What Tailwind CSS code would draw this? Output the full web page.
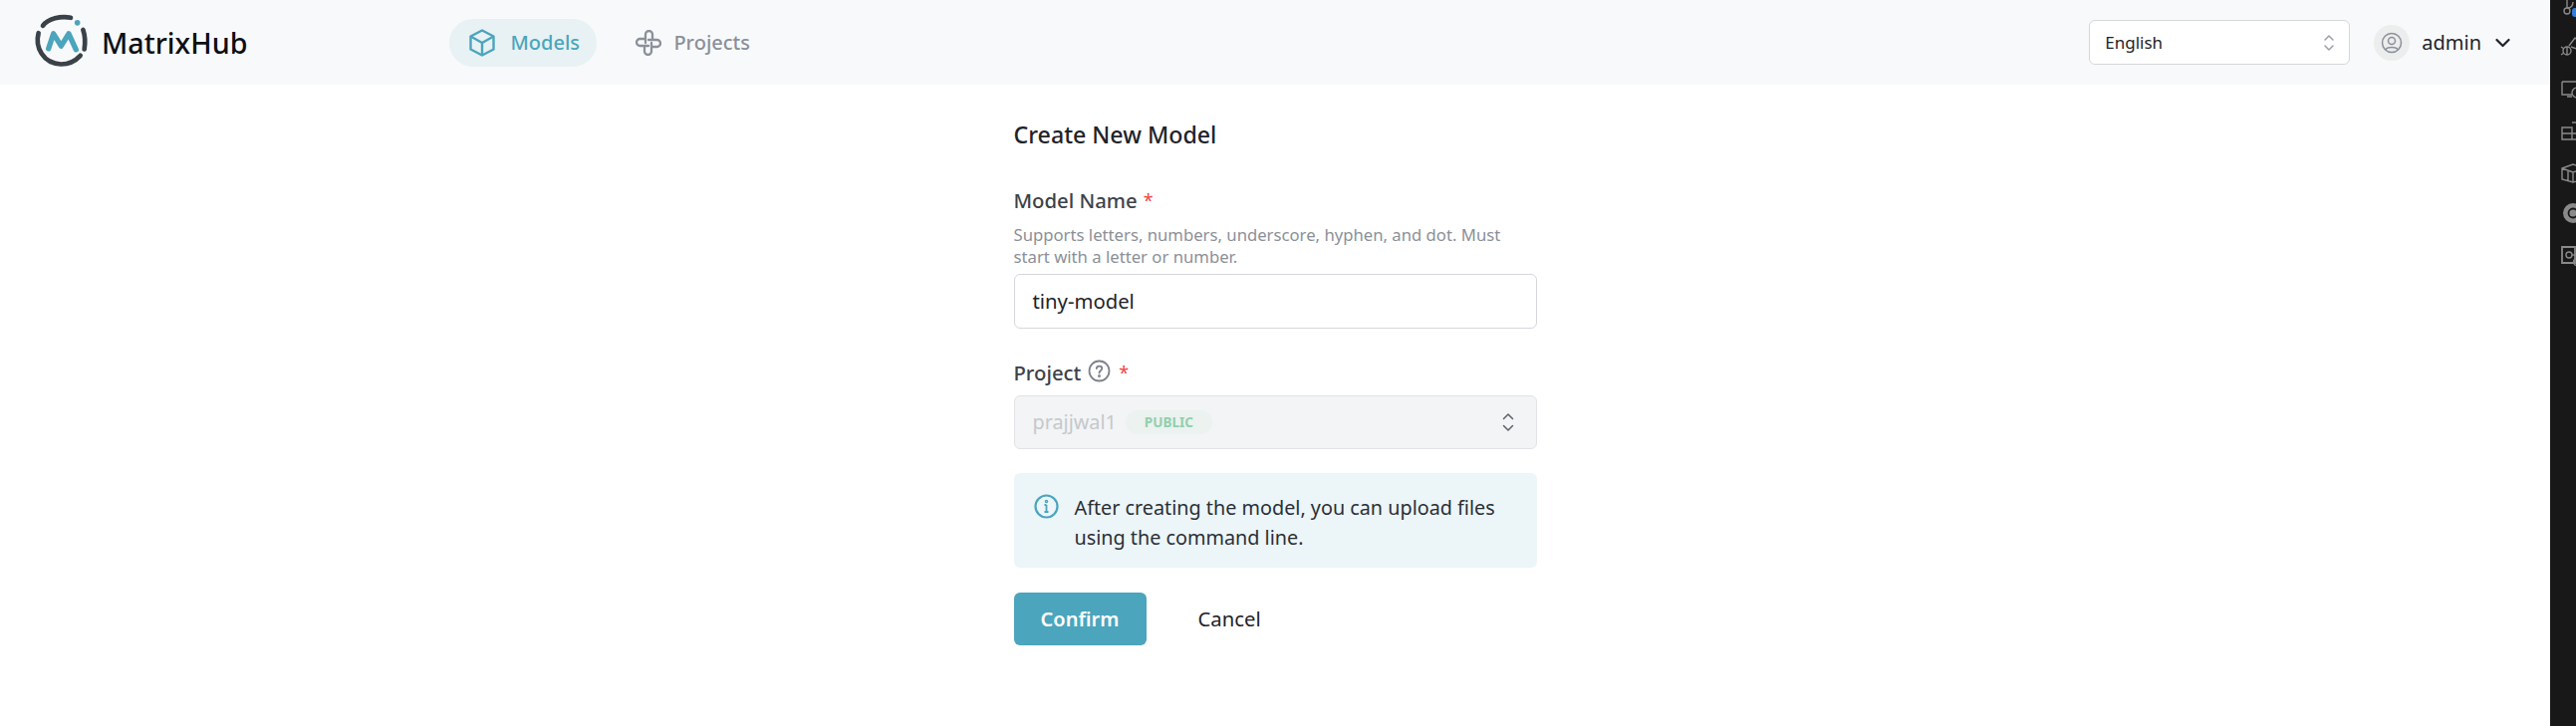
<!DOCTYPE html>
<html>
<head>
<meta charset="utf-8">
<script src="https://cdn.jsdelivr.net/npm/@tailwindcss/browser@4"></script>
</head>
<body class="bg-white h-screen overflow-hidden flex font-['Noto_Sans',sans-serif] text-[#1f2329]">
  <div class="flex-1 min-w-0">
    <header class="h-[85px] bg-[#f8f9fb] flex items-center pl-[33px] pr-[40px]">
      <svg class="w-[57px] h-[60px]" viewBox="40 37.5 171 180" fill="none">
        <path d="M70 76C85 55 125 45 154 52" stroke="#3a4149" stroke-width="14" stroke-linecap="round"/>
        <path d="M57 98C46 140 70 190 125 192C150 192 170 180 183 166" stroke="#3a4149" stroke-width="14" stroke-linecap="round"/>
        <path d="M191 88C198 108 198 128 195 147" stroke="#3a4149" stroke-width="14" stroke-linecap="round"/>
        <circle cx="174" cy="67" r="8.500" fill="#4ba5bc"/>
        <path d="M87 145L102 100L125 137L148 100L170 148" stroke="#4ba5bc" stroke-width="16" stroke-linecap="round" stroke-linejoin="round"/>
      </svg>
      <span class="ml-[12px] text-[28.700px] font-medium text-[#0b0f14]">MatrixHub</span>
      <nav class="ml-[203px] flex items-center gap-[39px]">
        <a class="h-[48px] w-[148px] rounded-full bg-[#e8f1f4] flex items-center pl-[20px] gap-[15px] text-[#4ba5bc] text-[20px] font-medium">
          <svg class="w-[26px] h-[28px]" viewBox="0 0 26 28" fill="none" stroke="#4ba5bc" stroke-width="2.400" stroke-linejoin="round"><path d="M13 1.500L24.500 7.500V20.500L13 26.500L1.500 20.500V7.500Z"/><path d="M1.500 7.500L13 14L24.500 7.500M13 14V26.500"/></svg>
          Models
        </a>
        <a class="flex items-center gap-[12px] text-[#8b9099] text-[20px] font-medium">
          <svg class="w-[26px] h-[26px]" viewBox="0 0 26 26" fill="none" stroke="#8b9099" stroke-width="2.300" stroke-linejoin="round" stroke-linecap="round"><path d="M10 13V4.500a3.500 3.500 0 0 1 7 0V9"/><path d="M13 10H21.500a3.500 3.500 0 0 1 0 7H17"/><path d="M16 13V21.500a3.500 3.500 0 0 1-7 0V17"/><path d="M13 16H4.500a3.500 3.500 0 0 1 0-7H9"/></svg>
          Projects
        </a>
      </nav>
      <div class="ml-auto w-[262px] h-[45px] bg-white border border-[#d5d7db] rounded-[6px] flex items-center justify-between pl-[15px] pr-[14px] text-[17px]">
        English
        <svg class="w-[12px] h-[18px]" viewBox="0 0 12 18" fill="none" stroke="#9a9ea6" stroke-width="1.500" stroke-linecap="round" stroke-linejoin="round"><path d="M2 6L6 2L10 6M2 12L6 16L10 12"/></svg>
      </div>
      <div class="ml-[24px] w-[36px] h-[36px] rounded-full bg-[#eceded] flex items-center justify-center">
        <svg class="w-[22px] h-[22px]" viewBox="0 0 22 22" fill="none" stroke="#8b9099" stroke-width="1.500"><circle cx="11" cy="11" r="9.500"/><circle cx="11" cy="9" r="3.500"/><path d="M4.800 18C6 14.500 16 14.500 17.200 18"/></svg>
      </div>
      <span class="ml-[12px] text-[20px]">admin</span>
      <svg class="ml-[14px] w-[15px] h-[10px]" viewBox="0 0 15 10" fill="none" stroke="#1f2329" stroke-width="2.200" stroke-linecap="round" stroke-linejoin="round"><path d="M1.500 2L7.500 8L13.500 2"/></svg>
    </header>

    <main class="w-[525px] mx-auto pt-[34px]">
      <h1 class="text-[23.200px] leading-[32px] font-medium">Create New Model</h1>

      <div class="mt-[36px] flex items-center gap-[6px] text-[20.300px] leading-[28px] font-medium text-[#3d4249]">Model Name <span class="text-[18px] font-normal text-[#ef4444]">*</span></div>
      <p class="mt-[10px] text-[16.700px] leading-[22px] text-[#8b9099]">Supports letters, numbers, underscore, hyphen, and dot. Must start with a letter or number.</p>
      <div class="mt-[6px] h-[55px] bg-white border border-[#d5d7db] rounded-[6px] flex items-center px-[18px] text-[20.300px]">tiny-model</div>

      <div class="mt-[30px] flex items-center text-[20.300px] leading-[28px] font-medium text-[#3d4249]">
        Project
        <svg class="ml-[7px] -mt-[3px] w-[23px] h-[23px]" viewBox="0 0 23 23" fill="none" stroke="#7d828a" stroke-width="1.800"><circle cx="11.500" cy="11.500" r="10"/><path d="M8.800 9C9 5.800 14.300 5.800 14.300 9C14.300 11 11.500 11 11.500 13.500" stroke-linecap="round"/><circle cx="11.500" cy="16.500" r="0.600"/></svg>
        <span class="ml-[8px] text-[18px] font-normal text-[#ef4444]">*</span>
      </div>
      <div class="mt-[9px] h-[54px] bg-[#f2f4f5] border border-[#e1e3e6] rounded-[6px] flex items-center pl-[18px] pr-[22px] text-[19.800px] text-[#c5c8cc]">
        prajjwal1
        <span class="ml-[9px] h-[24px] px-[19px] rounded-full bg-[#ebf2ef] flex items-center text-[13.500px] font-bold text-[#93cfae]">PUBLIC</span>
        <svg class="ml-auto w-[12px] h-[20px]" viewBox="0 0 12 20" fill="none" stroke="#5c6168" stroke-width="1.500" stroke-linecap="round" stroke-linejoin="round"><path d="M1.500 6.500L6 2L10.500 6.500M1.500 13.500L6 18L10.500 13.500"/></svg>
      </div>

      <div class="mt-[24px] h-[95px] bg-[#ecf5f8] rounded-[6px] flex px-[20px] pt-[20px] gap-[16px]">
        <svg class="shrink-0 mt-[1px] w-[25px] h-[25px]" viewBox="0 0 25 25" fill="none" stroke="#4ba5bc" stroke-width="2.200"><circle cx="12.500" cy="12.500" r="11"/><path d="M12.500 11V18M10.500 11H12.500M10.500 18H14.500" stroke-width="1.800"/><circle cx="12.500" cy="7.500" r="0.700"/></svg>
        <p class="text-[19.800px] leading-[30px] text-[#2a2f36]">After creating the model, you can upload files using the command line.</p>
      </div>

      <div class="mt-[25px] flex items-center">
        <button class="w-[133px] h-[53px] rounded-[6px] bg-[#4ba5bc] text-white text-[20px] font-semibold">Confirm</button>
        <button class="ml-[52px] text-[20.300px]">Cancel</button>
      </div>
    </main>
  </div>

  <aside class="w-[26px] shrink-0 bg-[#181818] overflow-hidden relative">
    <svg class="absolute left-[10px] top-0 w-[30px] h-[270px]" viewBox="0 0 30 270" fill="none" stroke="#8a8a8a" stroke-width="1.400">
      <path d="M7 0V8M7 8C11 8 13 6 13 2"/><circle cx="7" cy="11" r="3"/>
      <path d="M9 46L15 38L24 46M11 47L20 50"/><circle cx="7" cy="51" r="4"/><path d="M1 47L4 49M1 55L4 53M7 47V55"/>
      <path d="M2 82H26M2 82V95H12M7 97H12"/><circle cx="17" cy="93" r="5"/>
      <path d="M2 128H12V140H2ZM2 128V134H24M12 123H24V140H12M12 128V140"/>
      <path d="M2 169L13 165L26 169V180L13 183L2 180ZM2 169L13 173L26 169M13 173V183M8 171V181"/>
      <circle cx="13" cy="214" r="10" fill="#8a8a8a" stroke="none"/><circle cx="13" cy="214" r="4.500" stroke="#181818" stroke-width="1.800"/>
      <path d="M2 248H15V264H2Z" stroke-width="1.800"/><circle cx="9" cy="256" r="3"/><path d="M12 256H20"/><circle cx="17" cy="263" r="3.500"/>
    </svg>
    <span class="absolute left-[22px] top-[8px] w-[8px] h-[9px] rounded-[3px] bg-[#2f7fdc]"></span>
  </aside>
</body>
</html>
